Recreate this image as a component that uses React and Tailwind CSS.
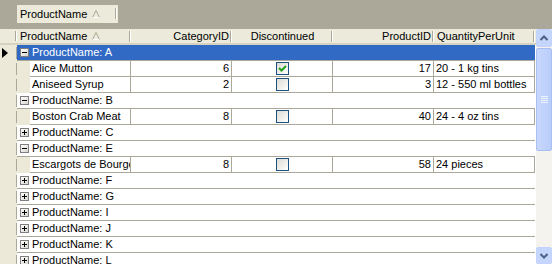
import { Fragment } from 'react'

const COLS = [
  { key: 'name', title: 'ProductName', w: 'w-[114px]', align: 'text-left', sort: true },
  { key: 'cat', title: 'CategoryID', w: 'w-[101px]', align: 'text-right' },
  { key: 'disc', title: 'Discontinued', w: 'w-[101px]', align: 'text-center' },
  { key: 'pid', title: 'ProductID', w: 'w-[101px]', align: 'text-right' },
  { key: 'qty', title: 'QuantityPerUnit', w: 'w-[101px]', align: 'text-left' },
]

const GROUPS = [
  {
    letter: 'A',
    open: true,
    selected: true,
    rows: [
      { name: 'Alice Mutton', cat: 6, disc: true, pid: 17, qty: '20 - 1 kg tins' },
      { name: 'Aniseed Syrup', cat: 2, disc: false, pid: 3, qty: '12 - 550 ml bottles' },
    ],
  },
  { letter: 'B', open: true, rows: [{ name: 'Boston Crab Meat', cat: 8, disc: false, pid: 40, qty: '24 - 4 oz tins' }] },
  { letter: 'C', open: false, rows: [] },
  { letter: 'E', open: true, rows: [{ name: 'Escargots de Bourgogne', cat: 8, disc: false, pid: 58, qty: '24 pieces' }] },
  { letter: 'F', open: false, rows: [] },
  { letter: 'G', open: false, rows: [] },
  { letter: 'I', open: false, rows: [] },
  { letter: 'J', open: false, rows: [] },
  { letter: 'K', open: false, rows: [] },
  { letter: 'L', open: false, rows: [] },
]

const font = { fontFamily: '"Liberation Sans", Arial, sans-serif' }

function SortGlyph() {
  return (
    <svg width="8" height="8" viewBox="0 0 8 8" className="inline-block ml-[5px] mb-[1px]">
      <path d="M4 0.5 L7.5 7.5 L0.5 7.5 Z" fill="none" stroke="#aca899" strokeWidth="1" />
      <path d="M7.5 7.5 L0.5 7.5" stroke="#ffffff" strokeWidth="1" />
    </svg>
  )
}

// etched separator used in headers
function Sep({ className = '' }) {
  return (
    <div className={`flex ${className}`}>
      <div className="w-px h-full bg-[#aca899]" />
      <div className="w-px h-full bg-white" />
    </div>
  )
}

function Expander({ open }) {
  return (
    <div className="w-[9px] h-[9px] border border-[#7f7f7f] bg-gradient-to-br from-white to-[#d8d6cc] flex items-center justify-center relative shrink-0">
      <div className="w-[5px] h-px bg-black" />
      {!open && <div className="absolute w-px h-[5px] bg-black" />}
    </div>
  )
}

function Checkbox({ checked }) {
  return (
    <div className="w-[13px] h-[13px] border border-[#1c5180] bg-gradient-to-br from-[#dcdbd3] to-white flex items-center justify-center">
      {checked && (
        <svg width="9" height="9" viewBox="0 0 9 9">
          <path d="M1 4 L3.5 6.5 L8 2" fill="none" stroke="#21a121" strokeWidth="2" />
        </svg>
      )}
    </div>
  )
}

function Selector({ current }) {
  return (
    <div className="w-[17px] h-[16px] bg-[#ece9d8] flex items-center justify-end shrink-0 relative">
      {current && (
        <svg width="6" height="10" viewBox="0 0 6 10" className="absolute left-[2px] top-[3px]">
          <path d="M0 0 L6 5 L0 10 Z" fill="#000" />
        </svg>
      )}
      <div className="w-px h-[12px] bg-[#aca899]" />
    </div>
  )
}

function GroupRow({ g }) {
  return (
    <div className="flex h-[16px]">
      <Selector current={g.selected} />
      <div
        className={`w-[518px] flex items-center border-b border-[#aca899] ${
          g.selected ? 'bg-[#316ac5] text-white border-[#316ac5]' : 'bg-white'
        }`}
      >
        <div className="ml-[3px] mr-[3px]">
          <Expander open={g.open} />
        </div>
        <span className="leading-none">ProductName: {g.letter}</span>
      </div>
    </div>
  )
}

function DataRow({ r }) {
  return (
    <div className="flex h-[16px]">
      <Selector />
      <div className="w-[13px] bg-[#ece9d8] shrink-0" />
      <div className="w-[101px] border-r border-b border-[#aca899] px-[2px] whitespace-nowrap overflow-hidden leading-[15px]">
        {r.name}
      </div>
      <div className="w-[101px] border-r border-b border-[#aca899] px-[2px] text-right leading-[15px]">{r.cat}</div>
      <div className="w-[101px] border-r border-b border-[#aca899] flex items-center justify-center">
        <Checkbox checked={r.disc} />
      </div>
      <div className="w-[101px] border-r border-b border-[#aca899] px-[2px] text-right leading-[15px]">{r.pid}</div>
      <div className="w-[101px] border-r border-b border-[#aca899] px-[2px] whitespace-nowrap overflow-hidden leading-[15px]">
        {r.qty}
      </div>
    </div>
  )
}

function ScrollBar() {
  return (
    <div className="w-[16px] h-full bg-[#f4f3ee] flex flex-col">
      <div className="h-[18px] rounded-[2px] border border-[#c3d3fd] bg-[#c5d6fc] flex items-center justify-center">
        <svg width="8" height="6" viewBox="0 0 8 6">
          <path d="M0.5 5 L4 1.5 L7.5 5" fill="none" stroke="#4d6185" strokeWidth="2" />
        </svg>
      </div>
      <div className="h-[103px] mt-px rounded-[2px] border border-[#a8bff3] bg-gradient-to-r from-[#c8d8fd] to-[#b9cdf9] flex flex-col items-center justify-center gap-[1px]">
        <div className="w-[7px] h-px bg-[#eef4fe]" />
        <div className="w-[7px] h-px bg-[#eef4fe]" />
        <div className="w-[7px] h-px bg-[#eef4fe]" />
        <div className="w-[7px] h-px bg-[#eef4fe]" />
      </div>
      <div className="flex-1" />
      <div className="h-[17px] rounded-[2px] border border-[#c3d3fd] bg-[#c5d6fc] flex items-center justify-center">
        <svg width="8" height="6" viewBox="0 0 8 6">
          <path d="M0.5 1 L4 4.5 L7.5 1" fill="none" stroke="#4d6185" strokeWidth="2" />
        </svg>
      </div>
    </div>
  )
}

export default function App() {
  return (
    <div className="w-[552px] h-[264px] overflow-hidden bg-[#aca899] text-[11px] text-black flex flex-col" style={font}>
      {/* group-by area */}
      <div className="h-[29px] shrink-0 pl-[17px] pt-[5px]">
        <div className="w-[101px] h-[18px] bg-[#ebeadb] flex items-center pl-[3px] relative">
          <span>ProductName</span>
          <SortGlyph />
          <Sep className="absolute right-[1px] top-[3px] h-[11px]" />
        </div>
      </div>

      <div className="flex flex-1 min-h-0">
        <div className="w-[536px] bg-white flex flex-col">
          {/* header */}
          <div className="flex h-[16px] bg-[#ebeadb] border-b-2 border-[#d6d2c2] shrink-0">
            <div className="w-[17px] flex items-center justify-end">
              <Sep className="h-[10px]" />
            </div>
            {COLS.map((c) => (
              <div key={c.key} className={`${c.w} flex items-center ${c.align === 'text-right' ? 'justify-end' : c.align === 'text-center' ? 'justify-center' : 'justify-start'} relative pr-[3px] pl-[3px] whitespace-nowrap`}>
                <span>{c.title}</span>
                {c.sort && <SortGlyph />}
                <Sep className="absolute right-0 top-[2px] h-[11px]" />
              </div>
            ))}
          </div>
          {/* body */}
          <div className="flex flex-col">
            {GROUPS.map((g) => (
              <Fragment key={g.letter}>
                <GroupRow g={g} />
                {g.open && g.rows.map((r) => <DataRow key={r.name} r={r} />)}
              </Fragment>
            ))}
          </div>
        </div>
        <ScrollBar />
      </div>
    </div>
  )
}
